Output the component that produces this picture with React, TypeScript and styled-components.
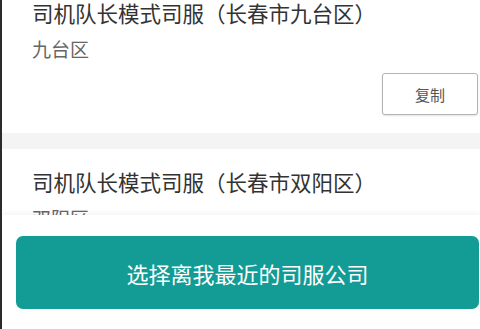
import React from "react";
import styled, { createGlobalStyle } from "styled-components";

const GlobalStyle = createGlobalStyle`
  html, body {
    margin: 0;
    padding: 0;
    background: #fff;
  }
  body {
    font-family: "Noto Sans CJK SC", "Noto Sans", sans-serif;
  }
`;

interface Company {
  name: string;
  district: string;
  copyable?: boolean;
}

const companies: Company[] = [
  { name: "司机队长模式司服（长春市九台区）", district: "九台区", copyable: true },
  { name: "司机队长模式司服（长春市双阳区）", district: "双阳区" }
];

export default function App() {
  return (
    <>
      <GlobalStyle />
      <Screen>
        <List>
          {companies.map((c, i) => (
            <Card key={c.name} first={i === 0}>
              <Title>{c.name}</Title>
              <District>{c.district}</District>
              {c.copyable && (
                <Actions>
                  <CopyButton>复制</CopyButton>
                </Actions>
              )}
            </Card>
          ))}
        </List>
        <BottomBar>
          <PrimaryButton>选择离我最近的司服公司</PrimaryButton>
        </BottomBar>
      </Screen>
    </>
  );
}

const Screen = styled.div`
  position: relative;
  width: 480px;
  height: 329px;
  overflow: hidden;
  box-sizing: border-box;
  border-left: 2px solid #2b2b2b;
  background: #f4f4f4;
`;

const List = styled.div`
  display: flex;
  flex-direction: column;
  gap: 16px;
`;

const Card = styled.div<{ first?: boolean }>`
  background: #fff;
  padding: ${(p) => (p.first ? "0" : "20px")} 2px 18px 30px;
  display: flex;
  flex-direction: column;
`;

const Title = styled.div`
  font-size: 21.5px;
  line-height: 26px;
  color: #333;
`;

const District = styled.div`
  margin-top: 9px;
  font-size: 19px;
  line-height: 28px;
  color: #666;
`;

const Actions = styled.div`
  display: flex;
  justify-content: flex-end;
  margin-top: 10px;
`;

const CopyButton = styled.button`
  width: 96px;
  height: 42px;
  box-sizing: border-box;
  border: 1px solid #b4b4b4;
  border-radius: 3px;
  background: #fff;
  box-shadow: 0 1px 2px rgba(0, 0, 0, 0.12);
  font-family: inherit;
  font-size: 15px;
  color: #555;
  padding: 0;
`;

const BottomBar = styled.div`
  position: absolute;
  left: 0;
  right: 0;
  bottom: 0;
  height: 114px;
  box-sizing: border-box;
  background: #fff;
  padding: 21px 1px 0 14px;
  box-shadow: 0 -2px 6px rgba(0, 0, 0, 0.05);
`;

const PrimaryButton = styled.button`
  width: 100%;
  height: 73px;
  border: none;
  border-radius: 7px;
  background: #139c95;
  color: #fff;
  font-family: inherit;
  font-size: 22px;
  padding: 0;
`;
